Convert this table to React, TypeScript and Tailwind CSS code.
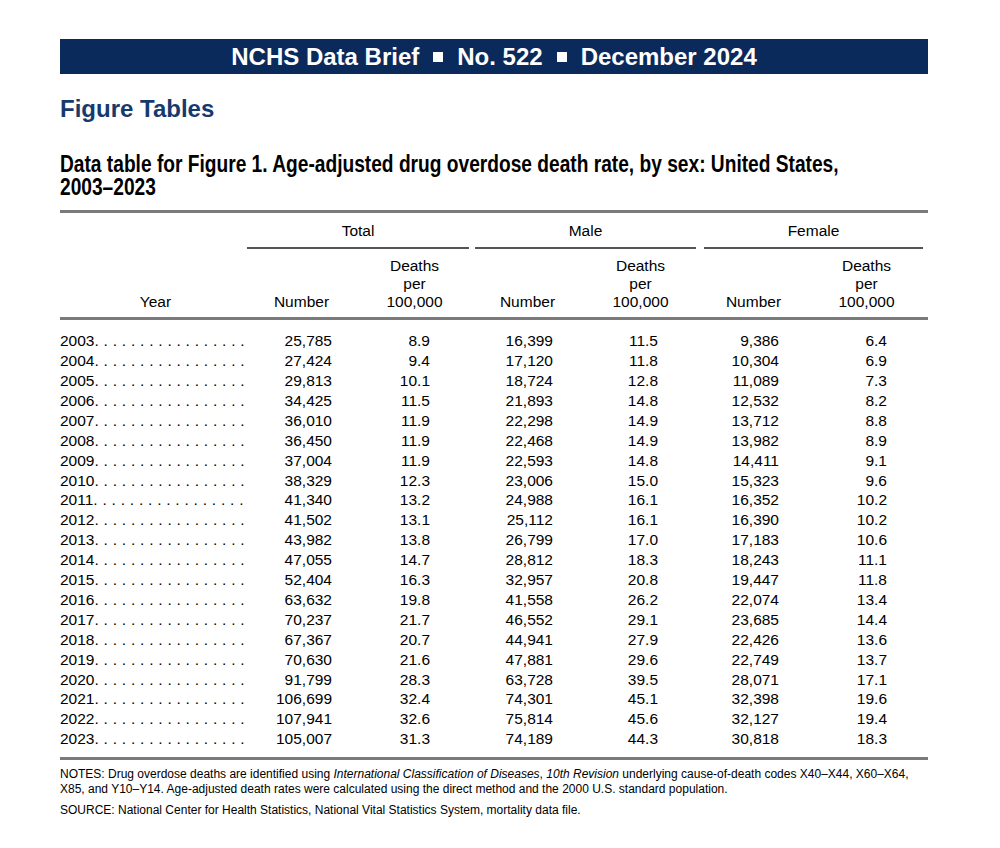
import React from 'react';

const rows: string[][] = [
  ['2003', '25,785', '8.9', '16,399', '11.5', '9,386', '6.4'],
  ['2004', '27,424', '9.4', '17,120', '11.8', '10,304', '6.9'],
  ['2005', '29,813', '10.1', '18,724', '12.8', '11,089', '7.3'],
  ['2006', '34,425', '11.5', '21,893', '14.8', '12,532', '8.2'],
  ['2007', '36,010', '11.9', '22,298', '14.9', '13,712', '8.8'],
  ['2008', '36,450', '11.9', '22,468', '14.9', '13,982', '8.9'],
  ['2009', '37,004', '11.9', '22,593', '14.8', '14,411', '9.1'],
  ['2010', '38,329', '12.3', '23,006', '15.0', '15,323', '9.6'],
  ['2011', '41,340', '13.2', '24,988', '16.1', '16,352', '10.2'],
  ['2012', '41,502', '13.1', '25,112', '16.1', '16,390', '10.2'],
  ['2013', '43,982', '13.8', '26,799', '17.0', '17,183', '10.6'],
  ['2014', '47,055', '14.7', '28,812', '18.3', '18,243', '11.1'],
  ['2015', '52,404', '16.3', '32,957', '20.8', '19,447', '11.8'],
  ['2016', '63,632', '19.8', '41,558', '26.2', '22,074', '13.4'],
  ['2017', '70,237', '21.7', '46,552', '29.1', '23,685', '14.4'],
  ['2018', '67,367', '20.7', '44,941', '27.9', '22,426', '13.6'],
  ['2019', '70,630', '21.6', '47,881', '29.6', '22,749', '13.7'],
  ['2020', '91,799', '28.3', '63,728', '39.5', '28,071', '17.1'],
  ['2021', '106,699', '32.4', '74,301', '45.1', '32,398', '19.6'],
  ['2022', '107,941', '32.6', '75,814', '45.6', '32,127', '19.4'],
  ['2023', '105,007', '31.3', '74,189', '44.3', '30,818', '18.3'],
];

// right padding of each data column, so the figures sit under their headings
const padRight = ['pr-[26px]', 'pr-[41px]', 'pr-[31px]', 'pr-[39px]', 'pr-[31px]', 'pr-[36px]'];

const groups = ['Total', 'Male', 'Female'];

const Square = () => <span className="inline-block w-[10px] h-[10px] bg-white mx-[14px]" />;

export default function App() {
  return (
    <div className="w-[1000px] h-[848px] bg-white text-black font-['Liberation_Sans',Arial,sans-serif] overflow-hidden">
      <div className="ml-[60px] w-[868px] pt-[39px]">
        <div className="h-[35px] bg-[#0b2a5c] flex items-center justify-center text-white font-bold text-[24px] leading-none">
          <span>NCHS Data Brief</span>
          <Square />
          <span>No. 522</span>
          <Square />
          <span>December 2024</span>
        </div>

        <h1 className="mt-[21px] text-[24px] leading-[28px] font-bold text-[#173a6e]">Figure Tables</h1>

        {/* condensed face is not installed, so squeeze the bold sans horizontally */}
        <h2 className="mt-[30px] text-[23px] leading-[23px] font-bold whitespace-nowrap">
          <span className="block origin-left scale-x-[0.833]">
            Data table for Figure 1. Age-adjusted drug overdose death rate, by sex: United States,
          </span>
          <span className="block origin-left scale-x-[0.833]">2003–2023</span>
        </h2>

        <div className="mt-[11px] h-[3px] bg-[#7a7a7a]" />

        {/* group headings */}
        <div className="grid grid-cols-[185px_repeat(3,226px)] text-[15.5px] leading-[20px] mt-[7.6px]">
          <div />
          {groups.map((g, i) => (
            <div key={g} className={i === 0 ? 'ml-[2px] mr-[2px]' : i === 1 ? 'ml-[4px] mr-[1px]' : 'ml-[7px] mr-[0px]'}>
              <div className="text-center pb-[6.4px] border-b-2 border-[#555555]">{g}</div>
            </div>
          ))}
        </div>

        {/* column headings */}
        <div className="grid grid-cols-[185px_repeat(6,113px)] text-[15.5px] leading-[18px] mt-[7.6px] items-end">
          <div className="text-center pl-[6px]">Year</div>
          {groups.map((g) => (
            <React.Fragment key={g}>
              <div className="text-center">Number</div>
              <div className="text-center">
                Deaths
                <br />
                per
                <br />
                100,000
              </div>
            </React.Fragment>
          ))}
        </div>

        <div className="mt-[6.4px] h-[3px] bg-[#7a7a7a]" />

        {/* body */}
        <div className="mt-[11.2px] text-[15.5px] leading-[19.9px]">
          {rows.map((r) => (
            <div key={r[0]} className="grid grid-cols-[185px_repeat(6,113px)]">
              <div className="whitespace-nowrap overflow-hidden">
                {r[0]}
                <span className="tracking-[0.25px]">{'.' + ' .'.repeat(16)}</span>
              </div>
              {r.slice(1).map((v, i) => (
                <div key={i} className={`text-right ${padRight[i]}`}>
                  {v}
                </div>
              ))}
            </div>
          ))}
        </div>

        <div className="mt-[8px] h-[3px] bg-[#7a7a7a]" />

        <p className="mt-[7px] text-[12px] leading-[15px] whitespace-nowrap">
          NOTES: Drug overdose deaths are identified using <i>International Classification of Diseases</i>,{' '}
          <i>10th Revision</i> underlying cause-of-death codes X40–X44, X60–X64,
          <br />
          X85, and Y10–Y14. Age-adjusted death rates were calculated using the direct method and the 2000 U.S.
          standard population.
        </p>
        <p className="mt-[6px] text-[12px] leading-[15px]">
          SOURCE: National Center for Health Statistics, National Vital Statistics System, mortality data file.
        </p>
      </div>
    </div>
  );
}
